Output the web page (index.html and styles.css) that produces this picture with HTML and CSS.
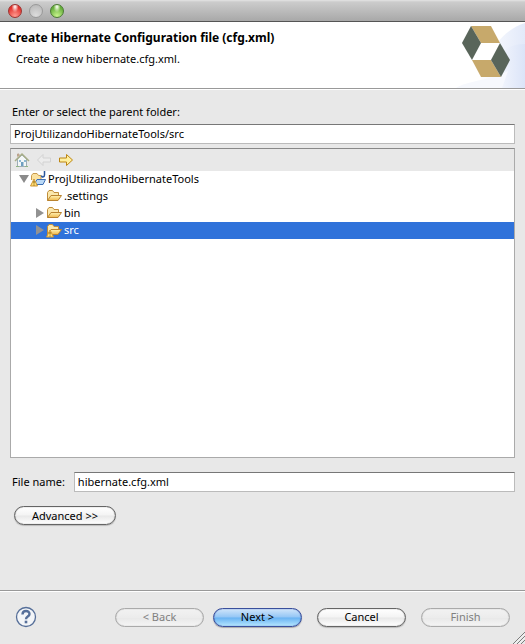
FILE: index.html
```
<!DOCTYPE html>
<html lang="en">

<head>
    <meta charset="UTF-8">
    <title>Create Hibernate Configuration file (cfg.xml)</title>
    <link rel="stylesheet" href="styles.css">
</head>

<body>
    <!-- shared folder icon -->
    <svg class="defs" width="0" height="0" aria-hidden="true">
        <defs>
            <linearGradient id="gold" x1="0" y1="0" x2="0" y2="1">
                <stop offset="0" stop-color="#fff3b4"/>
                <stop offset="1" stop-color="#efb84c"/>
            </linearGradient>
            <symbol id="folder" viewBox="0 0 16 16">
                <path d="M1.500 12.500V4.500L3 2.500h3.500l1.500 2h4.500v3" fill="#fbe8ac" stroke="#c08d3a"/>
                <path d="M1.500 12.500L5 7.500h10.500l-3.500 5z" fill="url(#gold)" stroke="#b9832f" stroke-linejoin="round"/>
            </symbol>
            <symbol id="warning" viewBox="0 0 8 8">
                <path d="M4 .5L7.500 7.500h-7z" fill="#ffe07a" stroke="#cf9630" stroke-linejoin="round"/>
                <path d="M4 2.500v2.500M4 6v1" stroke="#7a5200"/>
            </symbol>
        </defs>
    </svg>

    <div class="titlebar">
        <button class="light red" type="button" aria-label="Close"></button>
        <button class="light gray" type="button" aria-label="Minimize"></button>
        <button class="light green" type="button" aria-label="Zoom"></button>
    </div>

    <header class="header">
        <div>
            <h1>Create Hibernate Configuration file (cfg.xml)</h1>
            <p>Create a new hibernate.cfg.xml.</p>
        </div>
        <svg class="banner" width="75" height="66" viewBox="0 0 75 66" aria-hidden="true">
            <defs>
                <linearGradient id="sky" x1="0" y1="0" x2="1" y2="0">
                    <stop offset="0" stop-color="#ffffff"/>
                    <stop offset="1" stop-color="#dbe4f8"/>
                </linearGradient>
            </defs>
            <path d="M75 1C60 5 44 20 36 40L28 66h47z" fill="url(#sky)" opacity=".8"/>
            <path d="M75 22C62 22 54 27 50 34L36 66h39z" fill="url(#sky)"/>
            <path d="M6 66c10-7 36-8 52-17l-6 17z" fill="#f6f8fd"/>
            <path d="M21 4h20l9 17H31z" fill="#c7a96b"/>
            <path d="M31 21h19l-9 17H22z" fill="#fff"/>
            <path d="M22 38h19l10 17H31z" fill="#c7a96b"/>
            <path d="M21 4l10 17-9 17-10-17z" fill="#59655a"/>
            <path d="M50 21l10 17-9 17-10-17z" fill="#59655a"/>
        </svg>
    </header>

    <form class="wizard">
        <main class="content">
            <label for="parent">Enter or select the parent folder:</label>
            <input id="parent" name="parent" type="text" value="ProjUtilizandoHibernateTools/src">

            <div class="browser">
                <div class="toolbar">
                    <button type="button" aria-label="Home">
                        <svg width="16" height="16" viewBox="0 0 16 16">
                            <path d="M3.500 7v7.500h9V7L8 3z" fill="#f4f7f8" stroke="#9daeb8"/>
                            <path d="M3.500 4.500V2H5v2" fill="#d7a08c" stroke="#b9a58f"/>
                            <path d="M1 9l7-7 7 7" fill="none" stroke="#a7ad87" stroke-width="1.500"/>
                            <path d="M7 14v-4h2.500v4z" fill="#6f9fc0"/>
                            <path d="M5 8h2v2H5zM10 8h2v2h-2z" fill="#8db9d1"/>
                            <path d="M2 14.500h3M11 14.500h3" stroke="#91b583"/>
                        </svg>
                    </button>
                    <button type="button" aria-label="Back" disabled>
                        <svg width="16" height="16" viewBox="0 0 16 16">
                            <path d="M1.500 8L7 2.500V6h7.500v4H7v3.500z" fill="#ececec" stroke="#d2d2d2" stroke-linejoin="round"/>
                        </svg>
                    </button>
                    <button type="button" aria-label="Forward">
                        <svg width="16" height="16" viewBox="0 0 16 16">
                            <path d="M14.500 8L8.500 2.500V6H1.500v4h7v3.500z" fill="#fff0a0" stroke="#bd8613" stroke-linejoin="round"/>
                        </svg>
                    </button>
                </div>
                <ul class="tree" role="tree">
                    <li class="row" role="treeitem" aria-expanded="true">
                        <svg class="arrow" width="10" height="10" viewBox="0 0 10 10"><path d="M0 1h10L5 9z" fill="#8a8a8a"/></svg>
                        <svg class="icon" width="16" height="16" viewBox="0 0 16 16">
                            <path d="M1.500 9V4.500L3 2.500h4l1.500 2H11v4" fill="#fbe2a0" stroke="#c99a4c"/>
                            <path d="M14.500 0v4c0 2.500-3 2.500-3 .5" fill="none" stroke="#28569c" stroke-width="1.500"/>
                            <path d="M4 13.500l3-5h8.500l-2.500 5z" fill="#b9d8f6" stroke="#3d6fb5" stroke-linejoin="round"/>
                            <use href="#warning" x="0" y="7" width="8" height="9"/>
                        </svg>
                        <span>ProjUtilizandoHibernateTools</span>
                    </li>
                    <li class="row child leaf" role="treeitem">
                        <svg class="icon" width="16" height="16"><use href="#folder"/></svg>
                        <span>.settings</span>
                    </li>
                    <li class="row child" role="treeitem" aria-expanded="false">
                        <svg class="arrow" width="10" height="10" viewBox="0 0 10 10"><path d="M1 0v10l8-5z" fill="#929292"/></svg>
                        <svg class="icon" width="16" height="16"><use href="#folder"/></svg>
                        <span>bin</span>
                    </li>
                    <li class="row child selected" role="treeitem" aria-expanded="false" aria-selected="true">
                        <svg class="arrow" width="10" height="10" viewBox="0 0 10 10"><path d="M1 0v10l8-5z" fill="#929292"/></svg>
                        <svg class="icon" width="16" height="16" viewBox="0 0 16 16">
                            <use href="#folder" width="16" height="16"/>
                            <use href="#warning" x="0" y="7" width="8" height="9"/>
                        </svg>
                        <span>src</span>
                    </li>
                </ul>
            </div>

            <div class="filename">
                <label for="file">File name:</label>
                <input id="file" name="file" type="text" value="hibernate.cfg.xml">
            </div>

            <button class="btn advanced" type="button">Advanced &gt;&gt;</button>
        </main>

        <footer class="footer">
            <button class="help" type="button" aria-label="Help">
                <svg width="22" height="22" viewBox="0 0 22 22">
                    <circle cx="11" cy="11" r="9.500" fill="#f3f5f8" stroke="#566f99" stroke-width="1.300"/>
                    <path d="M7.500 8.500C7.500 4 14.500 4 14.500 8c0 2.700-3.500 2.500-3.500 5.200" fill="none" stroke="#566f99" stroke-width="2.400"/>
                    <rect x="9.700" y="14.700" width="2.600" height="2.600" fill="#566f99"/>
                </svg>
            </button>
            <div class="nav">
                <button class="btn" type="button" disabled>&lt; Back</button>
                <button class="btn primary" type="button">Next &gt;</button>
            </div>
            <button class="btn" type="button">Cancel</button>
            <button class="btn" type="submit" disabled>Finish</button>
        </footer>
    </form>

    <svg class="grip" width="12" height="12" viewBox="0 0 12 12" aria-hidden="true">
        <path d="M0 12L12 0M4 12l8-8M8 12l4-4" stroke="#7c7c7c"/>
        <path d="M1.500 12L12 1.500M5.500 12L12 5.500" stroke="#fff" stroke-width=".6"/>
    </svg>
</body>

</html>
```
FILE: styles.css
```
* {
    box-sizing: border-box;
}

body {
    margin: 0;
    min-height: 100vh;
    display: flex;
    flex-direction: column;
    background: #e8e8e8;
    color: #000;
    font-family: "Noto Sans", sans-serif;
    font-size: 11px;
    line-height: 16px;
}

button,
input {
    font: inherit;
    color: inherit;
}

button {
    padding: 0;
    border: none;
    background: none;
}

svg {
    display: block;
    flex: none;
}

.defs {
    position: absolute;
}

.titlebar {
    display: flex;
    align-items: center;
    gap: 7px;
    height: 22px;
    padding: 0 8px;
    background: linear-gradient(#e4e4e4, #cccccc 2px, #a8a8a8);
    border-bottom: 1px solid #555;
}

.light {
    width: 14px;
    height: 14px;
    border: 1px solid #777;
    border-radius: 50%;
}

.red {
    border-color: #9c3431;
    background: radial-gradient(ellipse at 50% 15%, #fff 0, #f3a5a0 20%, transparent 40%), radial-gradient(circle at 50% 90%, #ff9b90, #e2322d 70%);
}

.gray {
    border-color: #999;
    background: radial-gradient(circle at 50% 85%, #dcdcdc, #b5b5b5);
}

.green {
    border-color: #4b7a34;
    background: radial-gradient(ellipse at 50% 15%, #fff 0, #bde09d 20%, transparent 40%), radial-gradient(circle at 50% 90%, #c8f58d, #66ae3c 70%);
}

.header {
    display: flex;
    justify-content: space-between;
    background: #fff;
    border-bottom: 1px solid #999;
    padding-left: 8px;
}

.header h1 {
    margin: 8px 0 5px;
    font-size: 12px;
    line-height: 16px;
}

.header p {
    margin: 0 8px;
}

.wizard {
    flex: 1;
    display: flex;
    flex-direction: column;
    border-top: 1px solid #fff;
}

.content {
    flex: 1;
    display: flex;
    flex-direction: column;
    padding: 14px 10px 65px;
}

.content label {
    padding: 0 2px;
}

input {
    width: 100%;
    height: 20px;
    padding: 0 3px 2px;
    background: #fff;
    border: 1px solid #bbb;
    border-top-color: #777;
    outline: none;
}

#parent {
    margin: 4px 0;
}

.browser {
    flex: 1;
    background: #fff;
    border: 1px solid #aaa;
    border-top-color: #888;
}

.toolbar {
    display: flex;
    gap: 6px;
    padding: 3px;
    background: #e8e8e8;
}

.tree {
    margin: 0;
    padding: 0;
    list-style: none;
}

.row {
    display: flex;
    align-items: center;
    height: 17px;
    padding: 0 0 2px 8px;
}

.row .icon {
    margin: 0 2px 0 1px;
}

.child {
    padding-left: 24px;
}

.leaf {
    padding-left: 34px;
}

.selected {
    background: #2f72da;
    color: #fff;
}

.filename {
    display: flex;
    align-items: center;
    gap: 7px;
    margin: 14px 0;
}

.filename label {
    flex: none;
}

.filename input {
    flex: 1;
}

.btn {
    width: 89px;
    height: 19px;
    border: 1px solid #656565;
    border-radius: 10px;
    background: linear-gradient(#fff, #f4f4f4 48%, #e8e8e8 52%, #fff);
    box-shadow: inset 0 0 1px #666, 0 1px 1px #bbb;
    line-height: 16px;
}

.btn:disabled {
    border-color: #aaa;
    background: linear-gradient(#f2f2f2, #ececec 50%, #e8e8e8 52%, #f5f5f5);
    box-shadow: inset 0 0 1px #999;
    color: #808080;
}

.primary {
    border-color: #3a4f9c;
    background: linear-gradient(#d0e5fa, #94c6f5 48%, #68b2f2 52%, #b5e6ff);
    box-shadow: inset 0 0 1px #2a3f9c, 0 1px 1px #aaa;
}

.advanced {
    width: 102px;
    margin-left: 4px;
}

.footer {
    display: flex;
    align-items: center;
    gap: 15px;
    padding: 15px 15px 16px;
    border-top: 1px solid #999;
    box-shadow: inset 0 1px #fff;
}

.help {
    margin-right: auto;
}

.nav {
    display: flex;
    gap: 9px;
}

.grip {
    position: fixed;
    right: 0;
    bottom: 0;
}
```
